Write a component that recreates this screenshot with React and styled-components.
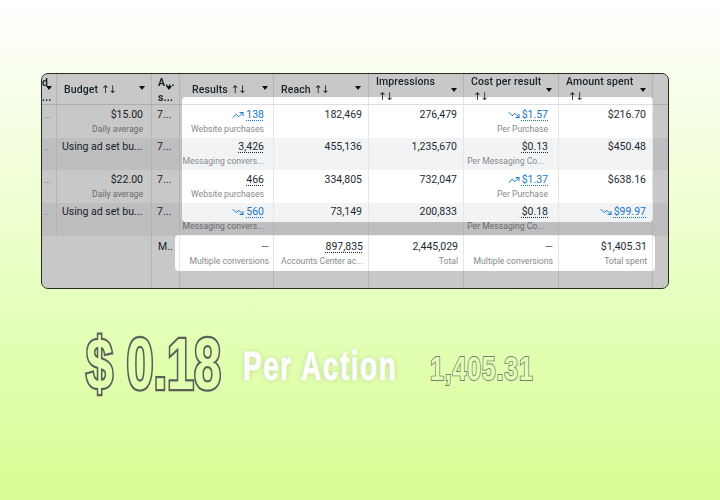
import React from "react";
import styled, { createGlobalStyle } from "styled-components";
import { TrendingUp, TrendingDown } from "lucide-react";

const GlobalStyle = createGlobalStyle`
  html, body { margin: 0; padding: 0; }
  body { font-family: Roboto, "Liberation Sans", sans-serif; }
`;

const columns = "15px 95px 28px 94px 95px 95px 95px 94px 15px";

// table box starts at 41,73 with a 1px border, the dim layer is measured from inside it
const roundedRect = (x, y, w, h, r) => {
  const l = x - 42;
  const t = y - 74;
  return `M${l + r} ${t}H${l + w - r}Q${l + w} ${t} ${l + w} ${t + r}V${t + h - r}Q${l + w} ${t + h} ${l + w - r} ${t + h}H${l + r}Q${l} ${t + h} ${l} ${t + h - r}V${t + r}Q${l} ${t} ${l + r} ${t}Z`;
};
const dimPath = `M0 0H626V214H0Z${roundedRect(182, 97, 471, 125, 4)}${roundedRect(175, 235, 480, 36, 4)}`;

const Page = styled.div`
  width: 720px;
  height: 500px;
  box-sizing: border-box;
  padding: 73px 0 0 41px;
  overflow: hidden;
  background: linear-gradient(180deg, #ffffff 0%, #eeffd0 42%, #e4ffb8 65%, #d9fd94 100%);
`;

const Table = styled.div`
  position: relative;
  width: 628px;
  height: 216px;
  box-sizing: border-box;
  border: 1px solid #26291f;
  border-radius: 7px;
  overflow: hidden;
  background: #ffffff;
  display: flex;
  flex-direction: column;
  filter: blur(0.35px);
`;

const DimLayer = styled.div`
  position: absolute;
  inset: 0;
  background: rgba(0, 0, 0, 0.215);
  clip-path: path(evenodd, "${dimPath}");
`;

const Row = styled.div`
  display: grid;
  grid-template-columns: ${columns};
  height: ${(p) => p.$height}px;
  flex: ${(p) => (p.$fill ? 1 : "none")};
  background: ${(p) => (p.$alt ? "#f2f3f5" : "transparent")};
  border-bottom: ${(p) => (p.$line ? "1px solid #dedede" : "none")};
  box-sizing: border-box;
`;

const HeaderCell = styled.div`
  position: relative;
  border-right: ${(p) => (p.$last ? "none" : "1px solid #e6e6e6")};
  padding: ${(p) => (p.$stacked ? "1px 0 0 7px" : `0 0 0 ${p.$left ?? 7}px`)};
  font-size: 10.5px;
  font-weight: 500;
  line-height: 14px;
  color: #1c2b33;
  letter-spacing: 0.1px;
  display: flex;
  flex-direction: column;
  justify-content: ${(p) => (p.$stacked ? "flex-start" : "center")};
  white-space: nowrap;
  overflow: hidden;
`;

const TinyHeader = styled(HeaderCell)`
  padding: 1px 0 0 ${(p) => p.$left}px;
  justify-content: flex-start;
  line-height: 15px;
  font-weight: 700;
`;

const SortMark = styled.span`
  font-family: "DejaVu Sans", sans-serif;
  font-size: 10.5px;
  font-weight: 400;
  letter-spacing: -1.5px;
  margin-left: ${(p) => (p.$below ? "2px" : "3px")};
`;

const Caret = styled.span`
  position: absolute;
  right: ${(p) => p.$right}px;
  top: ${(p) => p.$top}px;
  width: 0;
  height: 0;
  border-left: 3.5px solid transparent;
  border-right: 3.5px solid transparent;
  border-top: 4px solid #10161a;
`;

const Cell = styled.div`
  border-right: ${(p) => (p.$last ? "none" : "1px solid #e6e6e6")};
  padding: ${(p) => p.$top ?? 3}px ${(p) => p.$right ?? 6}px 0 ${(p) => p.$left ?? 0}px;
  text-align: ${(p) => p.$align || "right"};
  white-space: nowrap;
  overflow: hidden;
`;

const Main = styled.div`
  font-size: 10.5px;
  line-height: 14px;
  color: #1c2b33;
  display: flex;
  align-items: center;
  justify-content: ${(p) => (p.$align === "left" ? "flex-start" : "flex-end")};
  gap: 2px;
`;

const Metric = styled.span`
  color: ${(p) => (p.$blue ? "#1877c9" : "#1c2b33")};
  text-decoration: underline dotted;
  text-underline-offset: 2px;
`;

const Sub = styled.div`
  font-size: 8.65px;
  line-height: 12px;
  margin: 1px ${(p) => p.$inset || 0}px 0 0;
  color: #858a8e;
`;

const Dash = styled.span`
  color: #606770;
`;

const Headline = styled.div`
  display: flex;
  align-items: flex-start;
  margin: 40px 0 0 45px;
  height: 90px;
`;

const Stretched = styled.span`
  display: block;
  flex: none;
  width: ${(p) => p.$width}px;
  margin-top: ${(p) => p.$top}px;
  font-family: "Liberation Sans", Arial, sans-serif;
  font-weight: 700;
  white-space: nowrap;
  transform-origin: left top;
  transform: scaleX(${(p) => p.$scale});
`;

const BigPrice = styled(Stretched)`
  font-size: 72px;
  line-height: 84px;
  color: #e2feb2;
  paint-order: stroke fill;
  -webkit-text-stroke: 4.6px #5c5f58;
`;

const PerAction = styled(Stretched)`
  font-size: 40px;
  line-height: 46px;
  letter-spacing: 2.2px;
  color: #fdfefb;
  -webkit-text-stroke: 1px #fdfefb;
  text-shadow: 0 0 6px rgba(90, 90, 90, 0.3);
`;

const SmallPrice = styled(Stretched)`
  font-size: 34px;
  line-height: 40px;
  letter-spacing: 1.2px;
  color: #e2feb2;
  paint-order: stroke fill;
  -webkit-text-stroke: 1.9px #7a7e74;
`;

const rows = [
  { height: 33, pad: 3, edge: "...", budget: "$15.00", budgetSub: "Daily average", results: "138", resultsTrend: "up", resultsSub: "Website purchases", reach: "182,469", impressions: "276,479", cost: "$1.57", costTrend: "down", costSub: "Per Purchase", spent: "$216.70" },
  { height: 32, pad: 2, alt: true, edge: "..", budget: "Using ad set bu...", results: "3,426", resultsSub: "Messaging convers...", reach: "455,136", impressions: "1,235,670", cost: "$0.13", costSub: "Per Messaging Co...", spent: "$450.48" },
  { height: 33, pad: 3, edge: "...", budget: "$22.00", budgetSub: "Daily average", results: "466", resultsSub: "Website purchases", reach: "334,805", impressions: "732,047", cost: "$1.37", costTrend: "up", costSub: "Per Purchase", spent: "$638.16" },
  { height: 33, pad: 2, alt: true, edge: "..", budget: "Using ad set bu...", results: "560", resultsTrend: "down", resultsSub: "Messaging convers...", reach: "73,149", impressions: "200,833", cost: "$0.18", costSub: "Per Messaging Co...", spent: "$99.97", spentTrend: "down" },
];

const Trend = ({ dir }) => {
  const Icon = dir === "up" ? TrendingUp : TrendingDown;
  return <Icon size={12} color="#1877c9" strokeWidth={2} />;
};

const Value = ({ value, trend }) => (
  <Main>
    {trend && <Trend dir={trend} />}
    <Metric $blue={!!trend}>{value}</Metric>
  </Main>
);

const HeaderRow = () => (
  <Row $height={31} $line>
    <TinyHeader $left={0}>
      d
      <span>...</span>
      <Caret $right={4} $top={12} />
    </TinyHeader>
    <HeaderCell>
      <span>Budget<SortMark>↑↓</SortMark></span>
      <Caret $right={6} $top={12} />
    </HeaderCell>
    <TinyHeader $left={6}>
      A...
      <span>s...</span>
      <Caret $right={7} $top={12} />
    </TinyHeader>
    <HeaderCell $left={12}>
      <span>Results<SortMark>↑↓</SortMark></span>
      <Caret $right={5} $top={12} />
    </HeaderCell>
    <HeaderCell>
      <span>Reach<SortMark>↑↓</SortMark></span>
      <Caret $right={7} $top={12} />
    </HeaderCell>
    <HeaderCell $stacked>
      Impressions
      <SortMark $below>↑↓</SortMark>
      <Caret $right={6} $top={14} />
    </HeaderCell>
    <HeaderCell $stacked>
      Cost per result
      <SortMark $below>↑↓</SortMark>
      <Caret $right={6} $top={14} />
    </HeaderCell>
    <HeaderCell $stacked>
      Amount spent
      <SortMark $below>↑↓</SortMark>
      <Caret $right={6} $top={14} />
    </HeaderCell>
    <HeaderCell $last />
  </Row>
);

const DataRow = ({ row }) => (
  <Row $height={row.height} $alt={row.alt}>
    <Cell $top={row.pad} $align="left" $left={2} $right={0}>
      <Sub>{row.edge}</Sub>
    </Cell>
    {row.budgetSub ? (
      <Cell $top={row.pad} $right={8}>
        <Main>{row.budget}</Main>
        <Sub>{row.budgetSub}</Sub>
      </Cell>
    ) : (
      <Cell $top={row.pad} $align="left" $left={5} $right={0}>
        <Main $align="left">{row.budget}</Main>
      </Cell>
    )}
    <Cell $top={row.pad} $align="left" $left={5} $right={0}>
      <Main $align="left">7...</Main>
    </Cell>
    <Cell $top={row.pad} $right={9}>
      <Value value={row.results} trend={row.resultsTrend} />
      <Sub>{row.resultsSub}</Sub>
    </Cell>
    <Cell $top={row.pad}><Main>{row.reach}</Main></Cell>
    <Cell $top={row.pad}><Main>{row.impressions}</Main></Cell>
    <Cell $top={row.pad} $right={10}>
      <Value value={row.cost} trend={row.costTrend} />
      <Sub $inset={row.alt ? 4 : 0}>{row.costSub}</Sub>
    </Cell>
    <Cell $top={row.pad}>
      {row.spentTrend ? <Value value={row.spent} trend={row.spentTrend} /> : <Main>{row.spent}</Main>}
    </Cell>
    <Cell $last />
  </Row>
);

const TotalCell = ({ value, note, right = 5, plain }) => (
  <Cell $top={4} $right={right}>
    <Main>{plain ? value : <Metric>{value}</Metric>}</Main>
    <Sub>{note}</Sub>
  </Cell>
);

const TotalRow = () => (
  <Row $height={35}>
    <Cell style={{ gridColumn: "span 2" }} />
    <Cell $top={4} $align="left" $left={6} $right={0}>
      <Main $align="left">M..</Main>
    </Cell>
    <TotalCell plain value={<Dash>—</Dash>} note="Multiple conversions" right={4} />
    <TotalCell value="897,835" note="Accounts Center ac..." />
    <TotalCell plain value="2,445,029" note="Total" />
    <TotalCell plain value={<Dash>—</Dash>} note="Multiple conversions" />
    <TotalCell plain value="$1,405.31" note="Total spent" />
    <Cell $last />
  </Row>
);

const FillerRow = () => (
  <Row $fill>
    <Cell style={{ gridColumn: "span 2" }} />
    <Cell />
    <Cell />
    <Cell />
    <Cell />
    <Cell />
    <Cell />
    <Cell $last />
  </Row>
);

export default function App() {
  return (
    <Page>
      <GlobalStyle />
      <Table>
        <HeaderRow />
        {rows.map((row, i) => (
          <DataRow key={i} row={row} />
        ))}
        <TotalRow />
        <FillerRow />
        <DimLayer />
      </Table>
      <Headline>
        <BigPrice $width={157} $top={-7} $scale={0.675}>$ 0.18</BigPrice>
        <PerAction $width={187} $top={14} $scale={0.7}>Per Action</PerAction>
        <SmallPrice $width={110} $top={19} $scale={0.73}>1,405.31</SmallPrice>
      </Headline>
    </Page>
  );
}
